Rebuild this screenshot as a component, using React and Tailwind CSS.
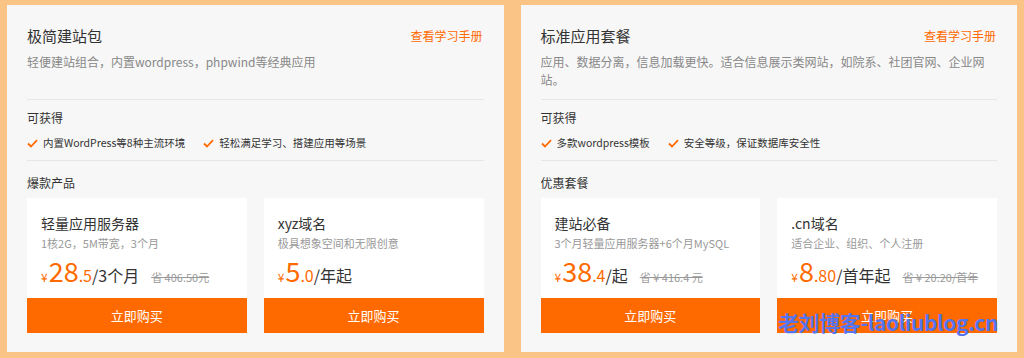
const font = "font-['Noto_Sans_CJK_SC','Noto_Sans',sans-serif]";

const panels = [
  {
    title: "极简建站包",
    desc: ["轻便建站组合，内置wordpress，phpwind等经典应用"],
    perks: ["内置WordPress等8种主流环境", "轻松满足学习、搭建应用等场景"],
    section: "爆款产品",
    cards: [
      { name: "轻量应用服务器", sub: "1核2G，5M带宽，3个月", int: "28", dec: ".5", unit: "/3个月", old: "省 406.50元" },
      { name: "xyz域名", sub: "极具想象空间和无限创意", int: "5", dec: ".0", unit: "/年起" },
    ],
  },
  {
    title: "标准应用套餐",
    desc: ["应用、数据分离，信息加载更快。适合信息展示类网站，如院系、社团官网、企业网", "站。"],
    perks: ["多款wordpress模板", "安全等级，保证数据库安全性"],
    section: "优惠套餐",
    cards: [
      { name: "建站必备", sub: "3个月轻量应用服务器+6个月MySQL", int: "38", dec: ".4", unit: "/起", old: "省 ¥ 416.4 元" },
      { name: ".cn域名", sub: "适合企业、组织、个人注册", int: "8", dec: ".80", unit: "/首年起", old: "省 ¥ 20.20/首年" },
    ],
  },
];

const Check = () => (
  <svg width="11" height="9" viewBox="0 0 11 9" className="shrink-0">
    <path d="M1 4.5 L4 7.5 L10 1.2" fill="none" stroke="#ff6a00" strokeWidth="1.8" />
  </svg>
);

const ProductCard = ({ card }) => (
  <div className="bg-white flex flex-col">
    <div className="h-[100px] pl-[14px] pt-[15px]">
      <div className="text-[14px] leading-[20px] text-[#333]">{card.name}</div>
      <div className="mt-[2px] text-[11px] leading-[16px] text-[#999]">{card.sub}</div>
      <div className="mt-[4px] flex items-baseline h-[32px] leading-[32px] whitespace-nowrap">
        <span className="text-[12px] text-[#ff6a00]">¥</span>
        <span className="ml-px text-[27px] text-[#ff6a00]">{card.int}</span>
        <span className="text-[16px] text-[#ff6a00]">{card.dec}</span>
        <span className="text-[16px] text-[#333]">{card.unit}</span>
        {card.old && (
          <span className="ml-3 text-[11px] text-[#999] line-through">{card.old}</span>
        )}
      </div>
    </div>
    <button className="h-[35px] bg-[#ff6a00] text-white text-[13px]">立即购买</button>
  </div>
);

const Panel = ({ panel }) => (
  <div className="flex-1 bg-[#f7f7f7] px-[20px] pt-[20px] pb-[19px] flex flex-col">
    <div className="flex justify-between items-center h-[22px]">
      <span className="text-[15px] text-[#333]">{panel.title}</span>
      <span className="text-[12px] text-[#ff6a00] mr-px">查看学习手册</span>
    </div>
    <div className="mt-[6px] h-[36px] text-[12px] leading-[18px] text-[#888]">
      {panel.desc.map((line) => (
        <div key={line}>{line}</div>
      ))}
    </div>
    <div className="mt-[10px] border-t border-[#e6e6e6]" />
    <div className="mt-[9px] text-[12px] leading-[18px] text-[#333]">可获得</div>
    <div className="mt-[8px] flex gap-[18px] h-[16px] items-center">
      {panel.perks.map((p) => (
        <div key={p} className="flex items-center gap-[5px] text-[10.5px] leading-[16px] text-[#333]">
          <Check />
          <span>{p}</span>
        </div>
      ))}
    </div>
    <div className="mt-[9px] border-t border-[#e6e6e6]" />
    <div className="mt-[13px] text-[12px] leading-[18px] text-[#333]">{panel.section}</div>
    <div className="mt-[6px] grid grid-cols-2 gap-[17px]">
      {panel.cards.map((c) => (
        <ProductCard key={c.name} card={c} />
      ))}
    </div>
  </div>
);

export default function App() {
  return (
    <div className={`${font} relative w-[1024px] h-[358px] bg-[#fbc487] flex gap-[17px] px-[7px] pt-[5px] pb-[6px]`}>
      {panels.map((p) => (
        <Panel key={p.title} panel={p} />
      ))}
      <div className="absolute left-[778px] top-[308px] text-[21px] leading-[28px] font-bold text-[#5474f0] tracking-[-0.4px] whitespace-nowrap">
        老刘博客-laoliublog.cn
      </div>
    </div>
  );
}
